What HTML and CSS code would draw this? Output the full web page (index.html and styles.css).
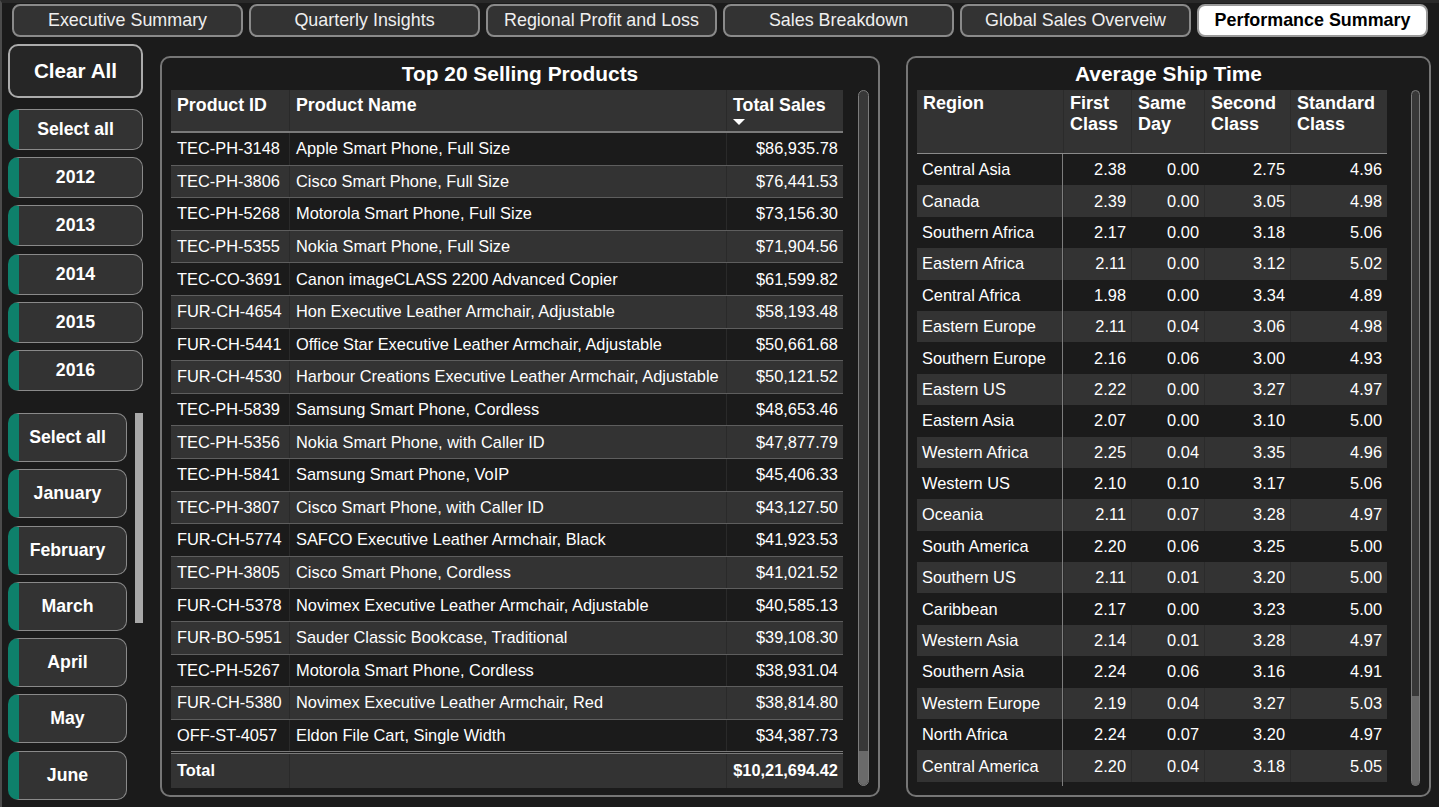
FILE: index.html
```html
<!DOCTYPE html>
<html lang="en">
<head>
<meta charset="utf-8">
<title>Performance Summary</title>
<link rel="stylesheet" href="styles.css">
</head>
<body>
<div class="app">
  <nav class="tabs">
    <div class="tab">Executive Summary</div>
    <div class="tab">Quarterly Insights</div>
    <div class="tab">Regional Profit and Loss</div>
    <div class="tab">Sales Breakdown</div>
    <div class="tab">Global Sales Overveiw</div>
    <div class="tab active">Performance Summary</div>
  </nav>
  <div class="main">
    <aside class="side">
      <div class="clear">Clear All</div>
      <div class="years">
        <div class="chip">Select all</div>
        <div class="chip">2012</div>
        <div class="chip">2013</div>
        <div class="chip">2014</div>
        <div class="chip">2015</div>
        <div class="chip">2016</div>
      </div>
      <div class="months-wrap">
        <div class="months">
          <div class="chip month">Select all</div>
          <div class="chip month">January</div>
          <div class="chip month">February</div>
          <div class="chip month">March</div>
          <div class="chip month">April</div>
          <div class="chip month">May</div>
          <div class="chip month">June</div>
        </div>
        <div class="side-scroll"></div>
      </div>
    </aside>

    <section class="panel products">
      <h2 class="panel-title">Top 20 Selling Products</h2>
      <div class="panel-body">
        <div class="ptable">
          <div class="prow phead">
            <div class="cell">Product ID</div>
            <div class="cell">Product Name</div>
            <div class="cell sales-head">Total Sales<span class="sort"></span></div>
          </div>
          <div class="prow"><div class="cell">TEC-PH-3148</div><div class="cell">Apple Smart Phone, Full Size</div><div class="cell num">$86,935.78</div></div>
          <div class="prow alt"><div class="cell">TEC-PH-3806</div><div class="cell">Cisco Smart Phone, Full Size</div><div class="cell num">$76,441.53</div></div>
          <div class="prow"><div class="cell">TEC-PH-5268</div><div class="cell">Motorola Smart Phone, Full Size</div><div class="cell num">$73,156.30</div></div>
          <div class="prow alt"><div class="cell">TEC-PH-5355</div><div class="cell">Nokia Smart Phone, Full Size</div><div class="cell num">$71,904.56</div></div>
          <div class="prow"><div class="cell">TEC-CO-3691</div><div class="cell">Canon imageCLASS 2200 Advanced Copier</div><div class="cell num">$61,599.82</div></div>
          <div class="prow alt"><div class="cell">FUR-CH-4654</div><div class="cell">Hon Executive Leather Armchair, Adjustable</div><div class="cell num">$58,193.48</div></div>
          <div class="prow"><div class="cell">FUR-CH-5441</div><div class="cell">Office Star Executive Leather Armchair, Adjustable</div><div class="cell num">$50,661.68</div></div>
          <div class="prow alt"><div class="cell">FUR-CH-4530</div><div class="cell">Harbour Creations Executive Leather Armchair, Adjustable</div><div class="cell num">$50,121.52</div></div>
          <div class="prow"><div class="cell">TEC-PH-5839</div><div class="cell">Samsung Smart Phone, Cordless</div><div class="cell num">$48,653.46</div></div>
          <div class="prow alt"><div class="cell">TEC-PH-5356</div><div class="cell">Nokia Smart Phone, with Caller ID</div><div class="cell num">$47,877.79</div></div>
          <div class="prow"><div class="cell">TEC-PH-5841</div><div class="cell">Samsung Smart Phone, VoIP</div><div class="cell num">$45,406.33</div></div>
          <div class="prow alt"><div class="cell">TEC-PH-3807</div><div class="cell">Cisco Smart Phone, with Caller ID</div><div class="cell num">$43,127.50</div></div>
          <div class="prow"><div class="cell">FUR-CH-5774</div><div class="cell">SAFCO Executive Leather Armchair, Black</div><div class="cell num">$41,923.53</div></div>
          <div class="prow alt"><div class="cell">TEC-PH-3805</div><div class="cell">Cisco Smart Phone, Cordless</div><div class="cell num">$41,021.52</div></div>
          <div class="prow"><div class="cell">FUR-CH-5378</div><div class="cell">Novimex Executive Leather Armchair, Adjustable</div><div class="cell num">$40,585.13</div></div>
          <div class="prow alt"><div class="cell">FUR-BO-5951</div><div class="cell">Sauder Classic Bookcase, Traditional</div><div class="cell num">$39,108.30</div></div>
          <div class="prow"><div class="cell">TEC-PH-5267</div><div class="cell">Motorola Smart Phone, Cordless</div><div class="cell num">$38,931.04</div></div>
          <div class="prow alt"><div class="cell">FUR-CH-5380</div><div class="cell">Novimex Executive Leather Armchair, Red</div><div class="cell num">$38,814.80</div></div>
          <div class="prow last"><div class="cell">OFF-ST-4057</div><div class="cell">Eldon File Cart, Single Width</div><div class="cell num">$34,387.73</div></div>
          <div class="prow ptotal"><div class="cell">Total</div><div class="cell"></div><div class="cell num">$10,21,694.42</div></div>
        </div>
        <div class="vscroll left-scroll"><div class="thumb"></div></div>
      </div>
    </section>

    <section class="panel ship">
      <h2 class="panel-title">Average Ship Time</h2>
      <div class="panel-body">
        <div class="stable">
          <div class="srow shead">
            <div class="cell">Region</div>
            <div class="cell">First<br>Class</div>
            <div class="cell">Same<br>Day</div>
            <div class="cell">Second<br>Class</div>
            <div class="cell">Standard<br>Class</div>
          </div>
          <div class="srow"><div class="cell reg">Central Asia</div><div class="cell num">2.38</div><div class="cell num">0.00</div><div class="cell num">2.75</div><div class="cell num">4.96</div></div>
          <div class="srow alt"><div class="cell reg">Canada</div><div class="cell num">2.39</div><div class="cell num">0.00</div><div class="cell num">3.05</div><div class="cell num">4.98</div></div>
          <div class="srow"><div class="cell reg">Southern Africa</div><div class="cell num">2.17</div><div class="cell num">0.00</div><div class="cell num">3.18</div><div class="cell num">5.06</div></div>
          <div class="srow alt"><div class="cell reg">Eastern Africa</div><div class="cell num">2.11</div><div class="cell num">0.00</div><div class="cell num">3.12</div><div class="cell num">5.02</div></div>
          <div class="srow"><div class="cell reg">Central Africa</div><div class="cell num">1.98</div><div class="cell num">0.00</div><div class="cell num">3.34</div><div class="cell num">4.89</div></div>
          <div class="srow alt"><div class="cell reg">Eastern Europe</div><div class="cell num">2.11</div><div class="cell num">0.04</div><div class="cell num">3.06</div><div class="cell num">4.98</div></div>
          <div class="srow"><div class="cell reg">Southern Europe</div><div class="cell num">2.16</div><div class="cell num">0.06</div><div class="cell num">3.00</div><div class="cell num">4.93</div></div>
          <div class="srow alt"><div class="cell reg">Eastern US</div><div class="cell num">2.22</div><div class="cell num">0.00</div><div class="cell num">3.27</div><div class="cell num">4.97</div></div>
          <div class="srow"><div class="cell reg">Eastern Asia</div><div class="cell num">2.07</div><div class="cell num">0.00</div><div class="cell num">3.10</div><div class="cell num">5.00</div></div>
          <div class="srow alt"><div class="cell reg">Western Africa</div><div class="cell num">2.25</div><div class="cell num">0.04</div><div class="cell num">3.35</div><div class="cell num">4.96</div></div>
          <div class="srow"><div class="cell reg">Western US</div><div class="cell num">2.10</div><div class="cell num">0.10</div><div class="cell num">3.17</div><div class="cell num">5.06</div></div>
          <div class="srow alt"><div class="cell reg">Oceania</div><div class="cell num">2.11</div><div class="cell num">0.07</div><div class="cell num">3.28</div><div class="cell num">4.97</div></div>
          <div class="srow"><div class="cell reg">South America</div><div class="cell num">2.20</div><div class="cell num">0.06</div><div class="cell num">3.25</div><div class="cell num">5.00</div></div>
          <div class="srow alt"><div class="cell reg">Southern US</div><div class="cell num">2.11</div><div class="cell num">0.01</div><div class="cell num">3.20</div><div class="cell num">5.00</div></div>
          <div class="srow"><div class="cell reg">Caribbean</div><div class="cell num">2.17</div><div class="cell num">0.00</div><div class="cell num">3.23</div><div class="cell num">5.00</div></div>
          <div class="srow alt"><div class="cell reg">Western Asia</div><div class="cell num">2.14</div><div class="cell num">0.01</div><div class="cell num">3.28</div><div class="cell num">4.97</div></div>
          <div class="srow"><div class="cell reg">Southern Asia</div><div class="cell num">2.24</div><div class="cell num">0.06</div><div class="cell num">3.16</div><div class="cell num">4.91</div></div>
          <div class="srow alt"><div class="cell reg">Western Europe</div><div class="cell num">2.19</div><div class="cell num">0.04</div><div class="cell num">3.27</div><div class="cell num">5.03</div></div>
          <div class="srow"><div class="cell reg">North Africa</div><div class="cell num">2.24</div><div class="cell num">0.07</div><div class="cell num">3.20</div><div class="cell num">4.97</div></div>
          <div class="srow alt"><div class="cell reg">Central America</div><div class="cell num">2.20</div><div class="cell num">0.04</div><div class="cell num">3.18</div><div class="cell num">5.05</div></div>
          <div class="srow tail"><div class="cell reg"></div></div>
        </div>
        <div class="vscroll right-scroll"><div class="thumb"></div></div>
      </div>
    </section>
  </div>
</div>
</body>
</html>
```

FILE: styles.css
```css
* { box-sizing: border-box; }

html, body {
  margin: 0;
  padding: 0;
}

body {
  background: #1b1b1b;
  color: #ffffff;
  font-family: "Liberation Sans", Arial, sans-serif;
  overflow: hidden;
}

.app {
  width: 1439px;
  height: 807px;
  border-top: 3px solid #2a2a2a;
  border-left: 2px solid #4c4c4c;
  overflow: hidden;
}

/* ---------- tabs ---------- */
.tabs {
  display: flex;
  gap: 6px;
  padding: 1px 0 0 10px;
}

.tab {
  width: 231px;
  height: 33px;
  border: 2px solid #8a8a8a;
  border-radius: 8px;
  background: #333333;
  color: #efefef;
  font-size: 17.9px;
  display: flex;
  align-items: center;
  justify-content: center;
}

.tab.active {
  background: #ffffff;
  border-color: #9a9a9a;
  color: #000000;
  font-weight: bold;
}

/* ---------- main ---------- */
.main {
  display: flex;
  align-items: flex-start;
  margin-top: 7px;
}

.side {
  width: 135px;
  margin-left: 6px;
  display: flex;
  flex-direction: column;
}

.clear {
  height: 54px;
  border: 2px solid #ababab;
  border-radius: 10px;
  background: #262626;
  font-size: 20.7px;
  font-weight: bold;
  display: flex;
  align-items: center;
  justify-content: center;
}

.years {
  margin-top: 11px;
  display: flex;
  flex-direction: column;
  gap: 7.2px;
}

.chip {
  height: 41px;
  border: 1.5px solid #8a8a8a;
  border-left: 11px solid #0e806b;
  border-radius: 10px;
  background: #333333;
  font-size: 17.7px;
  font-weight: bold;
  display: flex;
  align-items: center;
  justify-content: center;
  padding-right: 10px;
}

.months-wrap {
  margin-top: 22px;
  display: flex;
  gap: 8px;
  align-items: flex-start;
}

.months {
  width: 119px;
  display: flex;
  flex-direction: column;
  gap: 7.3px;
}

.chip.month {
  height: 49px;
}

.side-scroll {
  width: 8px;
  height: 210px;
  background: #a9a9a9;
}

/* ---------- panels ---------- */
.panel {
  height: 741px;
  margin-top: 12px;
  border: 2px solid #767676;
  border-radius: 10px;
  background: #1b1b1b;
}

.products {
  width: 720px;
  margin-left: 17px;
}

.ship {
  width: 525px;
  margin-left: 26px;
}

.panel-title {
  margin: 0;
  height: 32px;
  line-height: 31px;
  text-align: center;
  font-size: 20.9px;
  font-weight: bold;
}

.panel-body {
  display: flex;
  align-items: flex-start;
  padding: 0 9px;
}

.vscroll {
  height: 696px;
  border: 1px solid #7c7c7c;
  border-radius: 6px;
  background: #383838;
  display: flex;
  flex-direction: column;
  overflow: hidden;
}

.vscroll .thumb {
  margin-top: auto;
  background: #6a6a6a;
}

.left-scroll {
  width: 11px;
  margin-left: 15px;
}

.left-scroll .thumb {
  height: 34px;
}

.right-scroll {
  width: 10px;
  margin-left: 24px;
}

.right-scroll .thumb {
  height: 89px;
}

/* ---------- products table ---------- */
.ptable {
  width: 672px;
  font-size: 16.4px;
}

.prow {
  display: grid;
  grid-template-columns: 118px 437px 117px;
  height: 32.6px;
  border-bottom: 1px solid #5e5e5e;
  background: #1b1b1b;
}

.prow.alt {
  background: #333333;
}

.prow .cell {
  display: flex;
  align-items: center;
  padding: 0 6px;
  white-space: nowrap;
}

.prow .cell + .cell {
  border-left: 1px solid #2a2a2a;
}

.prow .cell.num {
  justify-content: flex-end;
  padding-right: 5px;
}

.prow.phead {
  height: 43px;
  background: #333333;
  border-bottom: 2px solid #7a7a7a;
  font-size: 17.8px;
  font-weight: bold;
}

.prow.phead .cell {
  align-items: flex-start;
  padding-top: 5px;
}

.prow.phead .sales-head {
  flex-direction: column;
  align-items: flex-start;
}

.sort {
  display: block;
  width: 0;
  height: 0;
  margin-top: 3px;
  border-left: 6px solid transparent;
  border-right: 6px solid transparent;
  border-top: 6px solid #ffffff;
}

.prow.last {
  border-bottom: 3px double #7a7a7a;
  height: 34px;
}

.prow.ptotal {
  height: 34px;
  background: #333333;
  border-bottom: none;
  font-weight: bold;
  font-size: 16.4px;
}

/* ---------- ship table ---------- */
.stable {
  width: 470px;
  font-size: 16.4px;
}

.srow {
  display: grid;
  grid-template-columns: 146px 68px 73px 86px 97px;
  height: 31.4px;
  background: #1b1b1b;
}

.srow.alt {
  background: #333333;
}

.srow .cell {
  display: flex;
  align-items: center;
  padding: 0 6px;
  white-space: nowrap;
}

.srow.alt .cell + .cell {
  border-left: 1px solid #2b2b2b;
}

.srow .cell.reg {
  border-right: 1px solid #7d7d7d;
  padding-left: 5px;
}

.srow .cell.num {
  justify-content: flex-end;
  padding-right: 5px;
}

.srow.shead {
  height: 64px;
  background: #333333;
  border-bottom: 1px solid #8a8a8a;
  font-size: 18px;
  font-weight: bold;
  line-height: 21px;
}

.srow.shead .cell {
  align-items: flex-start;
  padding-top: 3px;
}

.srow.shead .cell + .cell {
  border-left: 1px solid #2b2b2b;
}

.srow.tail {
  height: 4px;
  background: transparent;
}
```
